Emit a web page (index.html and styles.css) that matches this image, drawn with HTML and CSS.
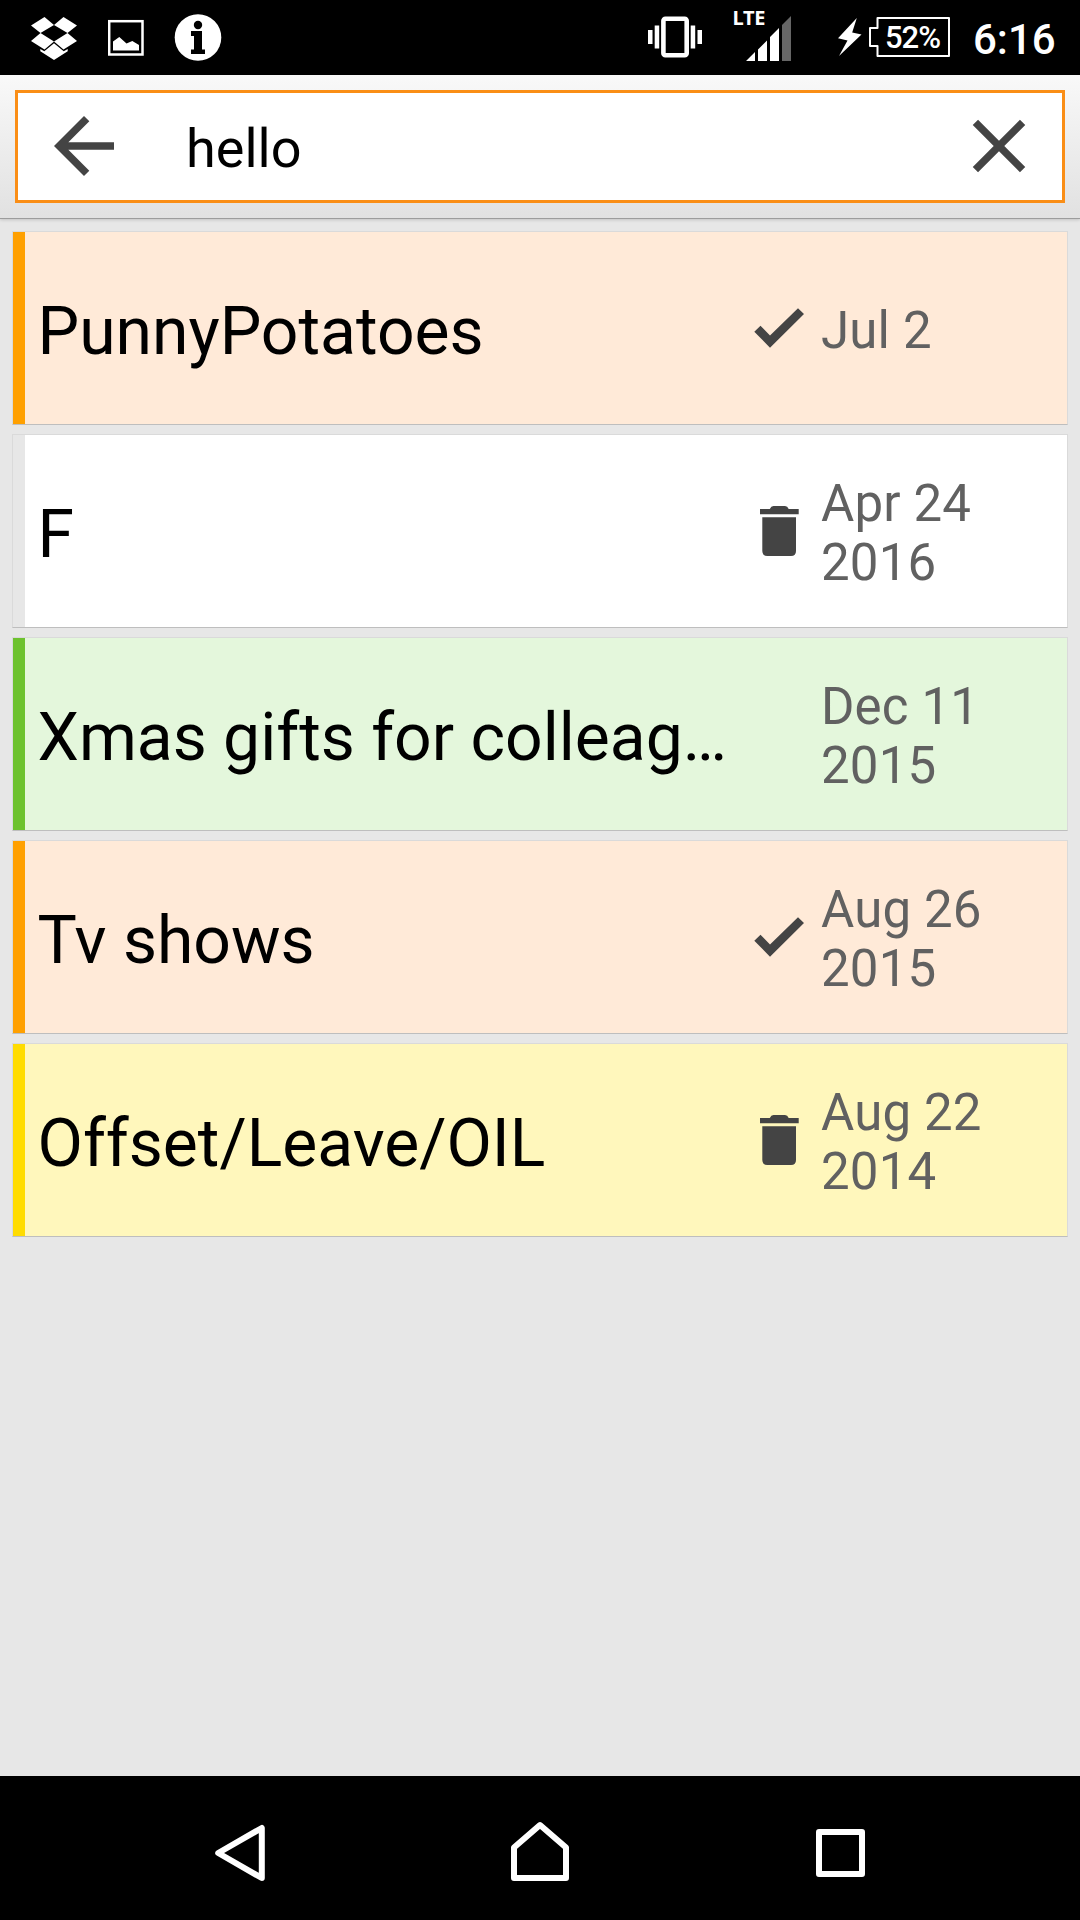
FILE: index.html
```html
<!DOCTYPE html>
<html lang="en">
<head>
<meta charset="utf-8">
<title>Notes search</title>
<link rel="stylesheet" href="styles.css">
</head>
<body>
<div class="screen">
  <svg class="defs" aria-hidden="true">
    <symbol id="check" viewBox="754 306 50 44"><path d="M754.3 331.7L760.5 325.8L770 335.5L798 308.2L804 314L770 347.7Z"/></symbol>
    <symbol id="trash" viewBox="754 506 50 50"><path d="M760 509H769.8Q771 506.2 773.5 506H785Q787.500 506.200 788.700 509H798.700V514.300H760ZM762.300 517.200H796V551Q796 556 791 556H767.300Q762.300 556 762.300 551Z"/></symbol>
  </svg>

  <header class="status-bar">
    <svg class="status-icon dropbox" viewBox="31 0 46 75" width="46" height="75">
      <path d="M44.500 17L54 25L40.500 33L31 25.500ZM63.500 17L77 25.500L67.500 33L54 25ZM40.500 33L54 41.500L44.500 49.500L31 41ZM67.500 33L77 41L63.500 49.500L54 41.500ZM54 43.300L63.700 51.200L67.700 49V51.200L54 60L40.300 51.200V49L44.300 51.200Z"/>
    </svg>
    <svg class="status-icon picture" viewBox="108 0 36 75" width="36" height="75">
      <rect class="outline" x="109.200" y="21.200" width="33.300" height="33.300" stroke-width="2.500"/>
      <path d="M113 50.500V41.500L119.300 37L126.500 43.500L132.300 41L139 45V50.500Z"/>
    </svg>
    <svg class="status-icon info" viewBox="174 0 48 75" width="48" height="75">
      <circle cx="198" cy="37.500" r="23.300"/>
      <path class="cutout" d="M191 31H202V49.500H205V54H191V49.500H194V36H191Z"/>
      <circle class="cutout" cx="198" cy="25" r="4.200"/>
    </svg>
    <svg class="status-icon vibrate" viewBox="648 0 54 75" width="54" height="75">
      <path d="M648 30H652.500V44H648ZM654.700 25.500H659.200V48.500H654.700ZM690.700 25.500H695.200V48.500H690.700ZM697.500 30H702V44H697.500Z"/>
      <rect class="outline" x="663.400" y="18.700" width="23.300" height="36.600" rx="2" stroke-width="4.600"/>
    </svg>
    <svg class="status-icon signal" viewBox="732 0 60 75" width="60" height="75">
      <text class="lte" x="732.500" y="25" textLength="33">LTE</text>
      <path d="M746 61L755 52V61ZM758 49.500L767 40.500V61H758ZM770 37L779 28V61H770Z"/>
      <path class="dim" d="M782 25L791 16V61H782Z"/>
    </svg>
    <svg class="status-icon bolt" viewBox="838 0 24 75" width="24" height="75">
      <path d="M856.800 18L838 38.300L847.500 40.500L839 56L861.500 34.500L852.200 32.500Z"/>
    </svg>
    <svg class="status-icon battery" viewBox="869 0 82 75" width="82" height="75">
      <path class="outline" stroke-width="2" stroke-linejoin="round" d="M877.500 18H949V56H877.500V46H870V28H877.500Z"/>
      <text class="percent" x="885" y="47.700" textLength="56">52%</text>
    </svg>
    <span class="clock">6:16</span>
  </header>

  <div class="toolbar">
    <div class="search-box">
      <svg class="glyph back" viewBox="0 0 24 24"><path d="M20 11H7.830l5.590-5.590L12 4l-8 8 8 8 1.410-1.410L7.830 13H20z"/></svg>
      <span class="query">hello</span>
      <svg class="glyph clear" viewBox="0 0 24 24"><path d="M19 6.410L17.590 5 12 10.590 6.410 5 5 6.410 10.590 12 5 17.590 6.410 19 12 13.410 17.590 19 19 17.590 13.410 12z"/></svg>
    </div>
  </div>

  <main class="notes">
    <article class="note orange">
      <h2 class="title">PunnyPotatoes</h2>
      <svg class="mark check"><use href="#check"/></svg>
      <time class="date">Jul 2</time>
    </article>
    <article class="note white">
      <h2 class="title">F</h2>
      <svg class="mark"><use href="#trash"/></svg>
      <time class="date">Apr 24<br>2016</time>
    </article>
    <article class="note green">
      <h2 class="title">Xmas gifts for colleag…</h2>
      <span class="mark"></span>
      <time class="date">Dec 11<br>2015</time>
    </article>
    <article class="note orange">
      <h2 class="title">Tv shows</h2>
      <svg class="mark check"><use href="#check"/></svg>
      <time class="date">Aug 26<br>2015</time>
    </article>
    <article class="note yellow">
      <h2 class="title">Offset/Leave/OIL</h2>
      <svg class="mark"><use href="#trash"/></svg>
      <time class="date">Aug 22<br>2014</time>
    </article>
  </main>

  <nav class="nav-bar">
    <svg class="nav-icon nav-back" viewBox="215 1776 50 144" width="50" height="144"><path d="M218.200 1853L261.800 1828V1878Z"/></svg>
    <svg class="nav-icon nav-home" viewBox="511 1776 58 144" width="58" height="144"><path d="M514 1847.500L540 1825L566 1847.500V1878H514Z"/></svg>
    <svg class="nav-icon nav-recent" viewBox="816 1776 49 144" width="49" height="144"><path d="M819 1832H862V1874H819Z"/></svg>
  </nav>
</div>
</body>
</html>
```
FILE: styles.css
```css
* { box-sizing: border-box; }

body {
  margin: 0;
  background: #e7e7e7;
  font-family: Roboto, "Noto Sans", sans-serif;
}

.screen {
  width: 1080px;
  height: 1920px;
  display: flex;
  flex-direction: column;
  overflow: hidden;
}

.defs { display: none; }

/* Status bar */
.status-bar {
  height: 75px;
  flex: none;
  display: flex;
  align-items: center;
  padding-left: 31px;
  background: #000;
  color: #fff;
}
.status-icon { flex: none; fill: #fff; }
.status-icon .outline { fill: none; stroke: #fff; }
.status-icon .cutout { fill: #000; }
.status-icon .dim { fill: #666; }
.picture { margin-left: 31px; }
.info { margin-left: 30px; }
.vibrate { margin-left: 426px; }
.signal { margin-left: 30px; }
.bolt { margin-left: 46px; }
.battery { margin-left: 7px; }
.lte { font: 700 20px "Noto Sans", sans-serif; }
.percent { font: 500 31px Roboto, sans-serif; }
.clock {
  margin-left: 22px;
  padding-top: 5px;
  font-size: 42px;
  font-weight: 500;
  line-height: 50px;
}

/* Search toolbar */
.toolbar {
  height: 144px;
  flex: none;
  padding: 15px 15px 0;
  background: linear-gradient(#f9f9f9, #e1e1e1);
  border-bottom: 1px solid #9c9c9c;
  box-shadow: 0 1px 3px rgba(0, 0, 0, .16);
}
.search-box {
  height: 113px;
  display: flex;
  align-items: center;
  padding: 0 18px 0 21px;
  background: #fff;
  border: 3px solid #fa8e16;
}
.glyph {
  width: 90px;
  height: 90px;
  flex: none;
  margin-bottom: 1px;
  fill: #444;
}
.query {
  flex: 1;
  margin-left: 57px;
  padding-top: 5px;
  font-size: 54px;
  line-height: 64px;
  color: #000;
}

/* Note list */
.notes {
  flex: 1;
  display: flex;
  flex-direction: column;
  gap: 9px;
  padding: 12px;
}
.note {
  height: 194px;
  flex: none;
  display: grid;
  grid-template-columns: 717px 50px 1fr;
  align-items: center;
  border: 1px solid #dadada;
  border-bottom-color: #bebebe;
  padding-left: 24px;
}
.title {
  margin: 0;
  padding-top: 8px;
  font-size: 66px;
  font-weight: 400;
  line-height: 78px;
  white-space: nowrap;
  text-indent: .5px;
  color: #000;
}
.mark { width: 50px; height: 50px; fill: #444; }
.mark.check { height: 44px; }
.date {
  padding: 4px 0 0 17px;
  font-size: 51px;
  line-height: 59px;
  letter-spacing: .15px;
  color: #616161;
}
.orange { background: linear-gradient(90deg, #ffa000 12px, #ffead8 12px); }
.white { background: linear-gradient(90deg, #e7e7e7 12px, #fff 12px); }
.green { background: linear-gradient(90deg, #6dc22e 12px, #e4f7dc 12px); }
.yellow { background: linear-gradient(90deg, #ffdc00 12px, #fff7bc 12px); }

/* Navigation bar */
.nav-bar {
  height: 144px;
  flex: none;
  display: flex;
  padding-left: 215px;
  background: #000;
}
.nav-icon {
  flex: none;
  fill: none;
  stroke: #fff;
  stroke-width: 6px;
  stroke-linejoin: round;
}
.nav-home { margin-left: 246px; }
.nav-recent { margin-left: 247px; }
```
